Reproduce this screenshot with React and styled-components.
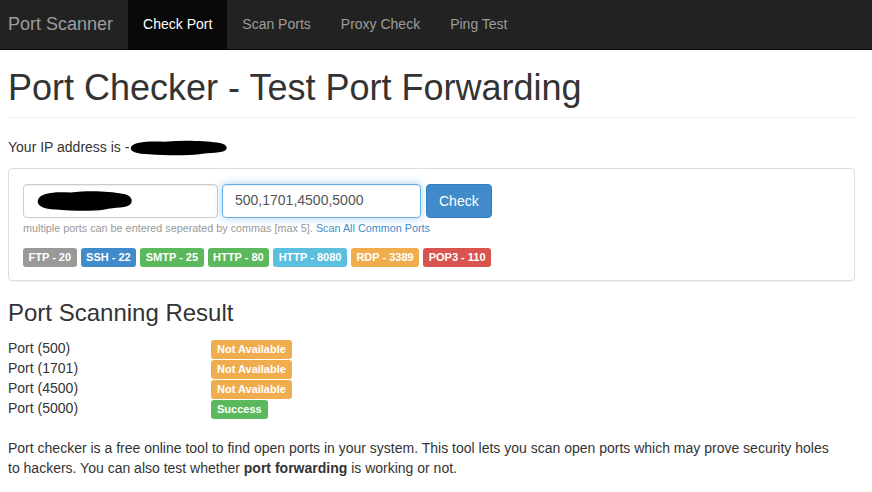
import styled, { createGlobalStyle } from "styled-components";

const GlobalStyle = createGlobalStyle`
  body {
    margin: 0;
    font-family: "Liberation Sans", Arial, sans-serif;
    font-size: 14px;
    line-height: 1.42857;
    color: #333;
    background: #fff;
  }
`;

const Navbar = styled.nav`
  height: 50px;
  background: #222;
  border-bottom: 1px solid #080808;
  display: flex;
  align-items: stretch;
  box-sizing: border-box;
`;

const Brand = styled.a`
  font-size: 18px;
  color: #9d9d9d;
  padding: 0 15px 0 8px;
  display: flex;
  align-items: center;
  text-decoration: none;
`;

const NavLink = styled.a`
  font-size: 14px;
  color: ${(p) => (p.$active ? "#fff" : "#9d9d9d")};
  background: ${(p) => (p.$active ? "#080808" : "transparent")};
  padding: 0 15px;
  display: flex;
  align-items: center;
  text-decoration: none;
`;

const Container = styled.div`
  padding: 0 17px 0 8px;
`;

const PageHeader = styled.h1`
  font-size: 36px;
  font-weight: 400;
  line-height: 1.1;
  margin: 18px 0 20px;
  padding-bottom: 9px;
  border-bottom: 1px solid #eee;
  color: #333;
`;

const IpLine = styled.p`
  margin: 0 0 10px;
  display: flex;
  align-items: center;
`;

const Panel = styled.div`
  border: 1px solid #ddd;
  border-radius: 4px;
  box-shadow: 0 1px 1px rgba(0, 0, 0, 0.05);
  padding: 15px 14px 13px;
`;

const InputRow = styled.div`
  display: flex;
  gap: 4px;
`;

const Field = styled.div`
  width: ${(p) => (p.$focus ? "199px" : "195px")};
  height: 34px;
  box-sizing: border-box;
  border: 1px solid ${(p) => (p.$focus ? "#66afe9" : "#ccc")};
  border-radius: 4px;
  box-shadow: inset 0 1px 1px rgba(0, 0, 0, 0.075)
    ${(p) => (p.$focus ? ", 0 0 8px rgba(102, 175, 233, 0.6)" : "")};
  padding: 6px 12px;
  font-size: 14px;
  color: #555;
  display: flex;
  align-items: center;
`;

const Button = styled.button`
  height: 34px;
  padding: 6px 12px;
  font-family: inherit;
  font-size: 14px;
  color: #fff;
  background: #428bca;
  border: 1px solid #357ebd;
  border-radius: 4px;
  margin-left: 1px;
`;

const Help = styled.p`
  font-size: 10.8px;
  color: #999;
  margin: 3px 0 12px;
`;

const Link = styled.a`
  color: #428bca;
  text-decoration: none;
`;

const LabelRow = styled.div`
  display: flex;
  gap: 4px;
`;

const colors = {
  default: "#999",
  primary: "#428bca",
  success: "#5cb85c",
  info: "#5bc0de",
  warning: "#f0ad4e",
  danger: "#d9534f",
};

const Label = styled.span`
  display: inline-block;
  background: ${(p) => colors[p.$kind]};
  color: #fff;
  font-size: 11px;
  font-weight: 700;
  line-height: 1;
  padding: 4px ${(p) => (p.$wide ? "6px" : "5.5px")} 4px;
  border-radius: 3px;
  white-space: nowrap;
`;

const Heading = styled.h3`
  font-size: 24px;
  font-weight: 400;
  line-height: 1.1;
  margin: 19px 0 13px;
  color: #333;
`;

const Results = styled.div`
  display: grid;
  grid-template-columns: 203px auto;
  grid-auto-rows: 20px;
  justify-items: start;
  align-items: center;
`;

const Para = styled.p`
  margin: 20px 0 0;
  max-width: 828px;
`;

const Blob = ({ w, h }) => (
  <svg width={w} height={h} viewBox="0 0 100 20" preserveAspectRatio="none">
    <path
      d="M2 9 C4 3 20 2 35 3 C55 1 75 2 88 4 C97 5 99 9 97 12 C94 16 80 15 70 17 C55 19 35 18 20 17 C8 17 0 14 2 9 Z"
      fill="#000"
    />
  </svg>
);

const ports = [
  ["FTP - 20", "default"],
  ["SSH - 22", "primary"],
  ["SMTP - 25", "success"],
  ["HTTP - 80", "success"],
  ["HTTP - 8080", "info"],
  ["RDP - 3389", "warning"],
  ["POP3 - 110", "danger"],
];

const results = [
  ["500", false],
  ["1701", false],
  ["4500", false],
  ["5000", true],
];

export default function App() {
  return (
    <>
      <GlobalStyle />
      <Navbar>
        <Brand>Port Scanner</Brand>
        <NavLink $active>Check Port</NavLink>
        <NavLink>Scan Ports</NavLink>
        <NavLink>Proxy Check</NavLink>
        <NavLink>Ping Test</NavLink>
      </Navbar>
      <Container>
        <PageHeader>Port Checker - Test Port Forwarding</PageHeader>
        <IpLine>
          Your IP address is -<Blob w={100} h={18} />
        </IpLine>
        <Panel>
          <InputRow>
            <Field>
              <Blob w={98} h={24} />
            </Field>
            <Field $focus>500,1701,4500,5000</Field>
            <Button>Check</Button>
          </InputRow>
          <Help>
            multiple ports can be entered seperated by commas [max 5].{" "}
            <Link>Scan All Common Ports</Link>
          </Help>
          <LabelRow>
            {ports.map(([t, k]) => (
              <Label key={t} $kind={k}>
                {t}
              </Label>
            ))}
          </LabelRow>
        </Panel>
        <Heading>Port Scanning Result</Heading>
        <Results>
          {results.flatMap(([p, ok]) => [
            <span key={p}>Port ({p})</span>,
            <Label key={p + "l"} $wide $kind={ok ? "success" : "warning"}>
              {ok ? "Success" : "Not Available"}
            </Label>,
          ])}
        </Results>
        <Para>
          Port checker is a free online tool to find open ports in your system.
          This tool lets you scan open ports which may prove security holes to
          hackers. You can also test whether <b>port forwarding</b> is working
          or not.
        </Para>
      </Container>
    </>
  );
}
